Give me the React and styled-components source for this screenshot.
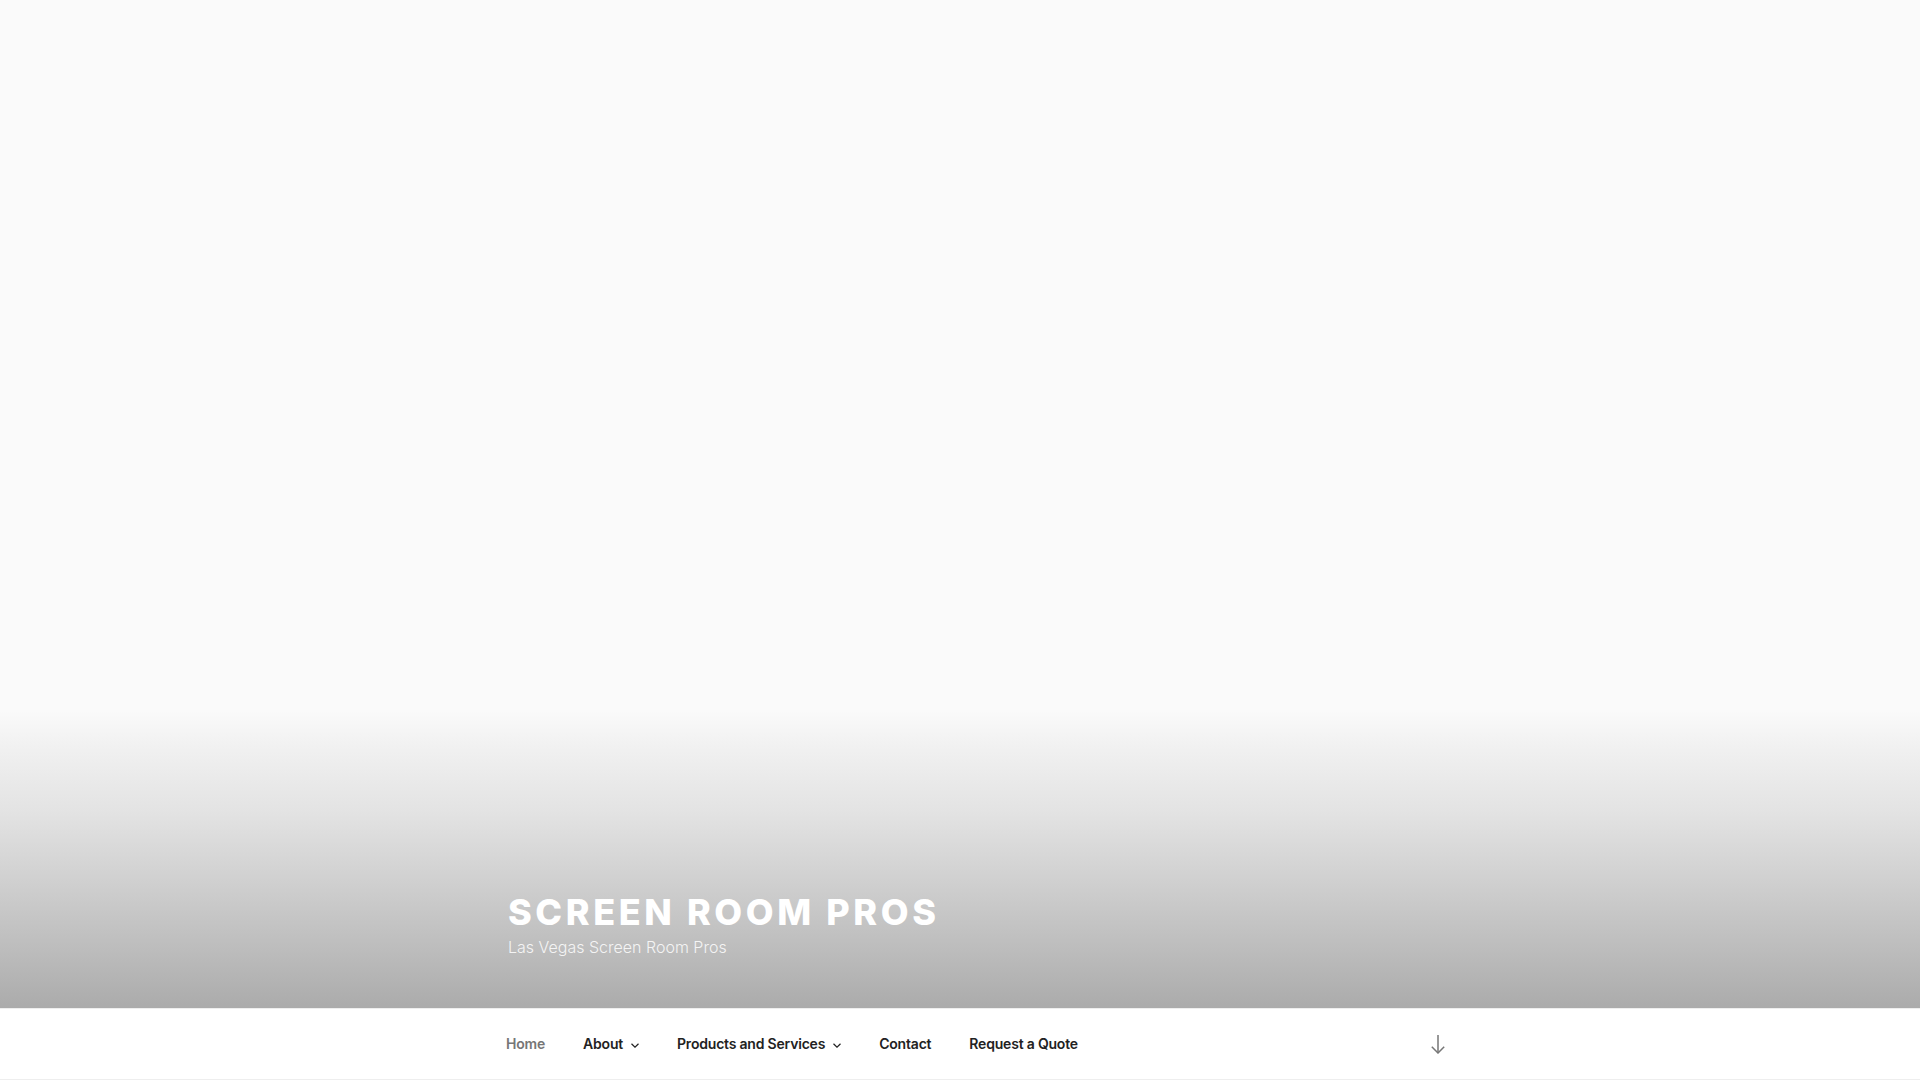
import React from 'react';
import styled, {createGlobalStyle} from 'styled-components';

const GlobalStyle = createGlobalStyle`
  html, body {
    margin: 0;
    padding: 0;
    background: #fff;
  }
  body {
    font-family: "Inter", "Roboto", "Liberation Sans", sans-serif;
    color: #222;
    -webkit-font-smoothing: antialiased;
  }
`

const Page = styled.div`
  display: flex;
  flex-direction: column;
  min-height: 1080px;
`

const Masthead = styled.header`
  height: 1008px;
  display: flex;
  flex-direction: column;
  justify-content: flex-end;
  background: linear-gradient(to bottom,
    #fafafa 0,
    #fafafa 70.5%,
    #f1f1f1 74%,
    #e3e3e3 80.5%,
    #d0d0d0 87.3%,
    #bdbdbd 94%,
    #ababab 100%);
`

const Wrap = styled.div`
  width: 1000px;
  margin: 0 auto;
  box-sizing: border-box;
  padding: 0 48px;
`

const Branding = styled(Wrap)`
  padding: 0 48px 49px;
`

const SiteTitle = styled.h1`
  margin: 0;
  font-weight: 800;
  font-size: 36px;
  line-height: 45px;
  letter-spacing: 0.1em;
  text-transform: uppercase;
  color: #fff;
`

const Tagline = styled.p`
  margin: 0;
  font-size: 16px;
  font-weight: 300;
  line-height: 24px;
  color: rgba(255, 255, 255, 0.85);
`

const NavBar = styled.nav`
  height: 72px;
  box-sizing: border-box;
  background: #fff;
  border-top: 1px solid #eee;
  border-bottom: 1px solid #eee;
  display: flex;
  align-items: center;
`

const NavInner = styled(Wrap)`
  display: flex;
  align-items: center;
  justify-content: space-between;
  padding: 0 14px 0 27px;
`

const Menu = styled.ul`
  display: flex;
  align-items: center;
  list-style: none;
  margin: 0;
  padding: 0;
`

const MenuItem = styled.li`
  display: flex;
  align-items: center;
  padding: 0 19px;
  font-size: 14px;
  font-weight: 600;
  line-height: 20px;
  letter-spacing: -0.2px;
  color: ${props => props.current ? '#767676' : '#222'};
  cursor: pointer;
`

const Chevron = styled.svg`
  margin: 2px 0 0 8px;
  width: 8px;
  height: 5px;
  fill: none;
  stroke: #222;
  stroke-width: 1.2;
`

const ScrollDown = styled.button`
  border: 0;
  background: none;
  padding: 0;
  width: 16px;
  height: 20px;
  display: flex;
  align-items: center;
  justify-content: center;
  color: #767676;
  cursor: pointer;
`

const items = [
    {label: 'Home', current: true},
    {label: 'About', sub: true},
    {label: 'Products and Services', sub: true},
    {label: 'Contact'},
    {label: 'Request a Quote'},
];

const App = () => {
    return (
        <Page>
            <GlobalStyle/>
            <Masthead>
                <Branding>
                    <SiteTitle>Screen Room Pros</SiteTitle>
                    <Tagline>Las Vegas Screen Room Pros</Tagline>
                </Branding>
            </Masthead>
            <NavBar>
                <NavInner>
                    <Menu>
                        {items.map(item => (
                            <MenuItem key={item.label} current={item.current ? 1 : 0}>
                                {item.label}
                                {item.sub && (
                                    <Chevron viewBox="0 0 8 5">
                                        <polyline points="0.5,0.8 4,4.2 7.5,0.8"/>
                                    </Chevron>
                                )}
                            </MenuItem>
                        ))}
                    </Menu>
                    <ScrollDown aria-label="Scroll down to content">
                        <svg width="14" height="19" viewBox="0 0 14 19" fill="none" stroke="currentColor" strokeWidth="1.5">
                            <line x1="7" y1="0" x2="7" y2="18"/>
                            <polyline points="0.8,11.8 7,18 13.2,11.8"/>
                        </svg>
                    </ScrollDown>
                </NavInner>
            </NavBar>
        </Page>
    );
};

export default App;
